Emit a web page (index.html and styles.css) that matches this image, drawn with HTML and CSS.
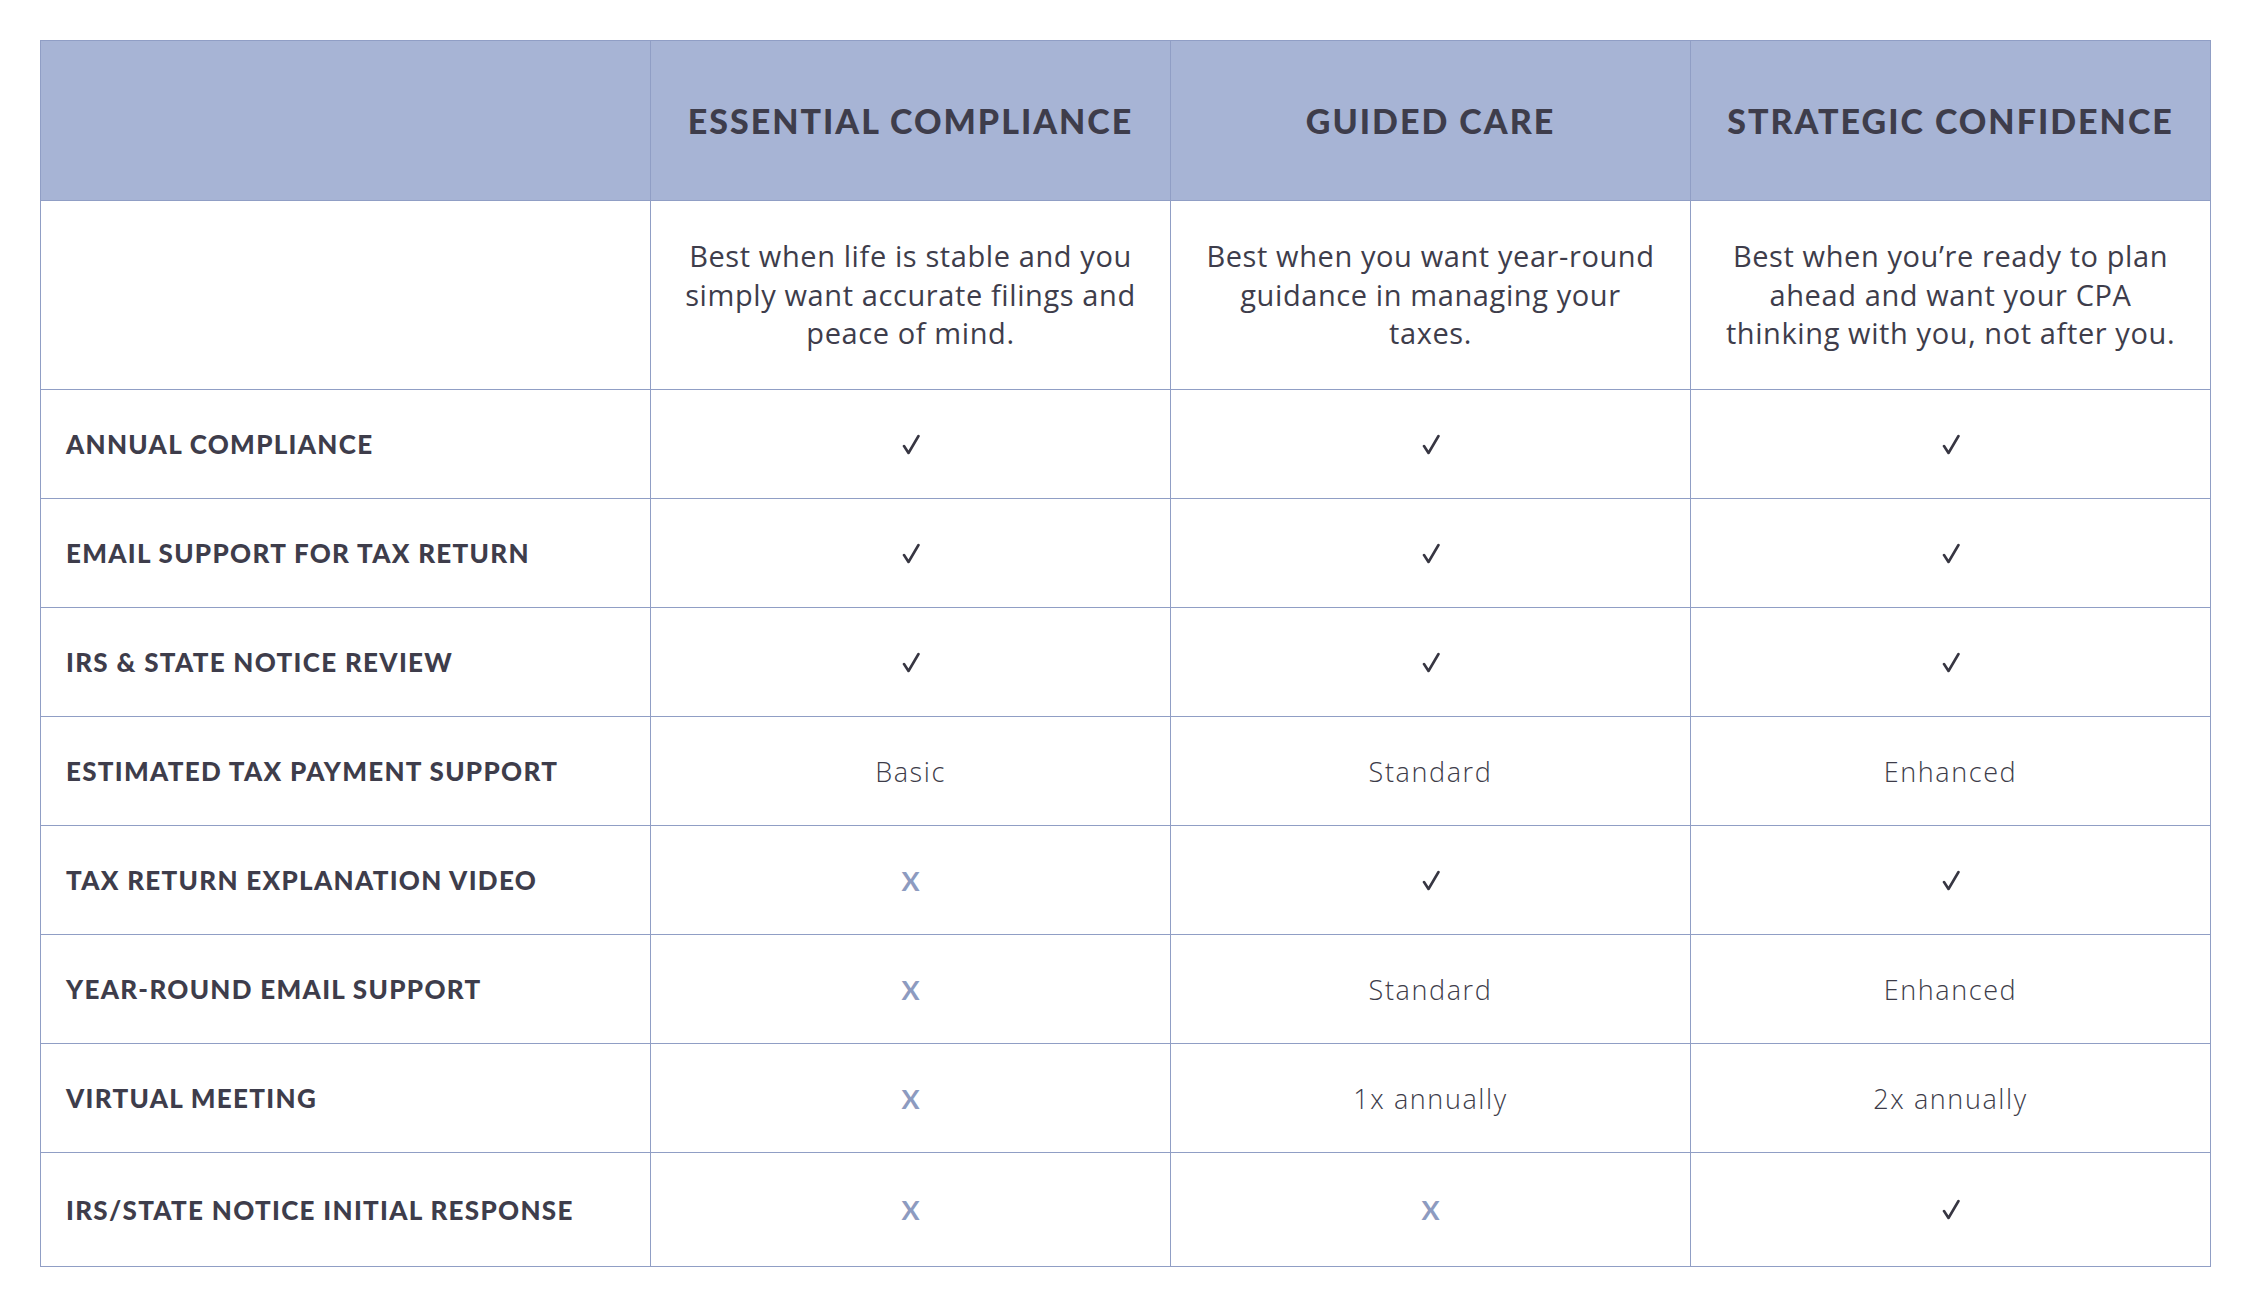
FILE: index.html
```html
<!DOCTYPE html>
<html lang="en">
<head>
<meta charset="utf-8">
<title>Service Tiers</title>
<link rel="stylesheet" href="styles.css">
</head>
<body>
<table class="tiers">
  <colgroup>
    <col class="c-label">
    <col class="c-tier">
    <col class="c-tier">
    <col class="c-tier">
  </colgroup>
  <thead>
    <tr class="head">
      <th></th>
      <th>ESSENTIAL COMPLIANCE</th>
      <th>GUIDED CARE</th>
      <th>STRATEGIC CONFIDENCE</th>
    </tr>
  </thead>
  <tbody>
    <tr class="desc">
      <td></td>
      <td>Best when life is stable and you<br>simply want accurate filings and<br>peace of mind.</td>
      <td>Best when you want year-round<br>guidance in managing your<br>taxes.</td>
      <td>Best when you’re ready to plan<br>ahead and want your CPA<br>thinking with you, not after you.</td>
    </tr>
    <tr class="row">
      <th>ANNUAL COMPLIANCE</th>
      <td class="yes"><svg class="check" viewBox="0 0 18 21"><path d="M2 12 L6.5 19 L16.5 2"/></svg></td>
      <td class="yes"><svg class="check" viewBox="0 0 18 21"><path d="M2 12 L6.5 19 L16.5 2"/></svg></td>
      <td class="yes"><svg class="check" viewBox="0 0 18 21"><path d="M2 12 L6.5 19 L16.5 2"/></svg></td>
    </tr>
    <tr class="row">
      <th>EMAIL SUPPORT FOR TAX RETURN</th>
      <td class="yes"><svg class="check" viewBox="0 0 18 21"><path d="M2 12 L6.5 19 L16.5 2"/></svg></td>
      <td class="yes"><svg class="check" viewBox="0 0 18 21"><path d="M2 12 L6.5 19 L16.5 2"/></svg></td>
      <td class="yes"><svg class="check" viewBox="0 0 18 21"><path d="M2 12 L6.5 19 L16.5 2"/></svg></td>
    </tr>
    <tr class="row">
      <th>IRS &amp; STATE NOTICE REVIEW</th>
      <td class="yes"><svg class="check" viewBox="0 0 18 21"><path d="M2 12 L6.5 19 L16.5 2"/></svg></td>
      <td class="yes"><svg class="check" viewBox="0 0 18 21"><path d="M2 12 L6.5 19 L16.5 2"/></svg></td>
      <td class="yes"><svg class="check" viewBox="0 0 18 21"><path d="M2 12 L6.5 19 L16.5 2"/></svg></td>
    </tr>
    <tr class="row">
      <th>ESTIMATED TAX PAYMENT SUPPORT</th>
      <td>Basic</td><td>Standard</td><td>Enhanced</td>
    </tr>
    <tr class="row">
      <th>TAX RETURN EXPLANATION VIDEO</th>
      <td class="no">X</td>
      <td class="yes"><svg class="check" viewBox="0 0 18 21"><path d="M2 12 L6.5 19 L16.5 2"/></svg></td>
      <td class="yes"><svg class="check" viewBox="0 0 18 21"><path d="M2 12 L6.5 19 L16.5 2"/></svg></td>
    </tr>
    <tr class="row">
      <th>YEAR-ROUND EMAIL SUPPORT</th>
      <td class="no">X</td><td>Standard</td><td>Enhanced</td>
    </tr>
    <tr class="row">
      <th>VIRTUAL MEETING</th>
      <td class="no">X</td><td>1x annually</td><td>2x annually</td>
    </tr>
    <tr class="row last">
      <th>IRS/STATE NOTICE INITIAL RESPONSE</th>
      <td class="no">X</td><td class="no">X</td>
      <td class="yes"><svg class="check" viewBox="0 0 18 21"><path d="M2 12 L6.5 19 L16.5 2"/></svg></td>
    </tr>
  </tbody>
</table>
</body>
</html>
```
FILE: styles.css
```css
html, body {
  margin: 0;
  padding: 0;
  background: #ffffff;
}

body {
  padding: 40px 0 0 40px;
  font-family: "Open Sans", "Liberation Sans", sans-serif;
  color: #3d3c49;
}

.tiers {
  border-collapse: collapse;
  table-layout: fixed;
  width: 2171px;
}

.c-label { width: 610px; }
.c-tier { width: 520px; }

.tiers th,
.tiers td {
  border: 1.5px solid #909ec5;
  padding: 0;
  text-align: center;
  vertical-align: middle;
}

.head th {
  height: 159px;
  background: #a7b4d5;
  font-family: "Lato", "Liberation Sans", sans-serif;
  font-weight: 900;
  font-size: 34px;
  letter-spacing: 2px;
  color: #3e3d4b;
}

.desc td {
  height: 188px;
  padding: 0 4px;
  font-family: "Open Sans", "Liberation Sans", sans-serif;
  font-weight: 400;
  font-size: 29px;
  line-height: 38.5px;
  letter-spacing: 0.6px;
  white-space: nowrap;
  color: #3e3d4b;
}

.row th,
.row td {
  height: 108px;
}

.row.last th,
.row.last td {
  height: 113px;
}

.row th {
  text-align: left;
  padding-left: 25px;
  font-family: "Lato", "Liberation Sans", sans-serif;
  font-weight: 900;
  font-size: 26px;
  letter-spacing: 1.3px;
  color: #3e3d4b;
}

.row td {
  font-family: "Open Sans", "Liberation Sans", sans-serif;
  font-weight: 300;
  font-size: 27px;
  letter-spacing: 1.6px;
  color: #3d3c49;
}

.check {
  width: 18px;
  height: 21px;
  display: block;
  margin: 0 auto;
  fill: none;
  stroke: #373642;
  stroke-width: 2.6;
  stroke-linecap: round;
  stroke-linejoin: round;
}

.row td.no {
  font-family: "Lato", "Liberation Sans", sans-serif;
  font-weight: 700;
  font-size: 27px;
  letter-spacing: 0;
  color: #8d9bc0;
}
```
